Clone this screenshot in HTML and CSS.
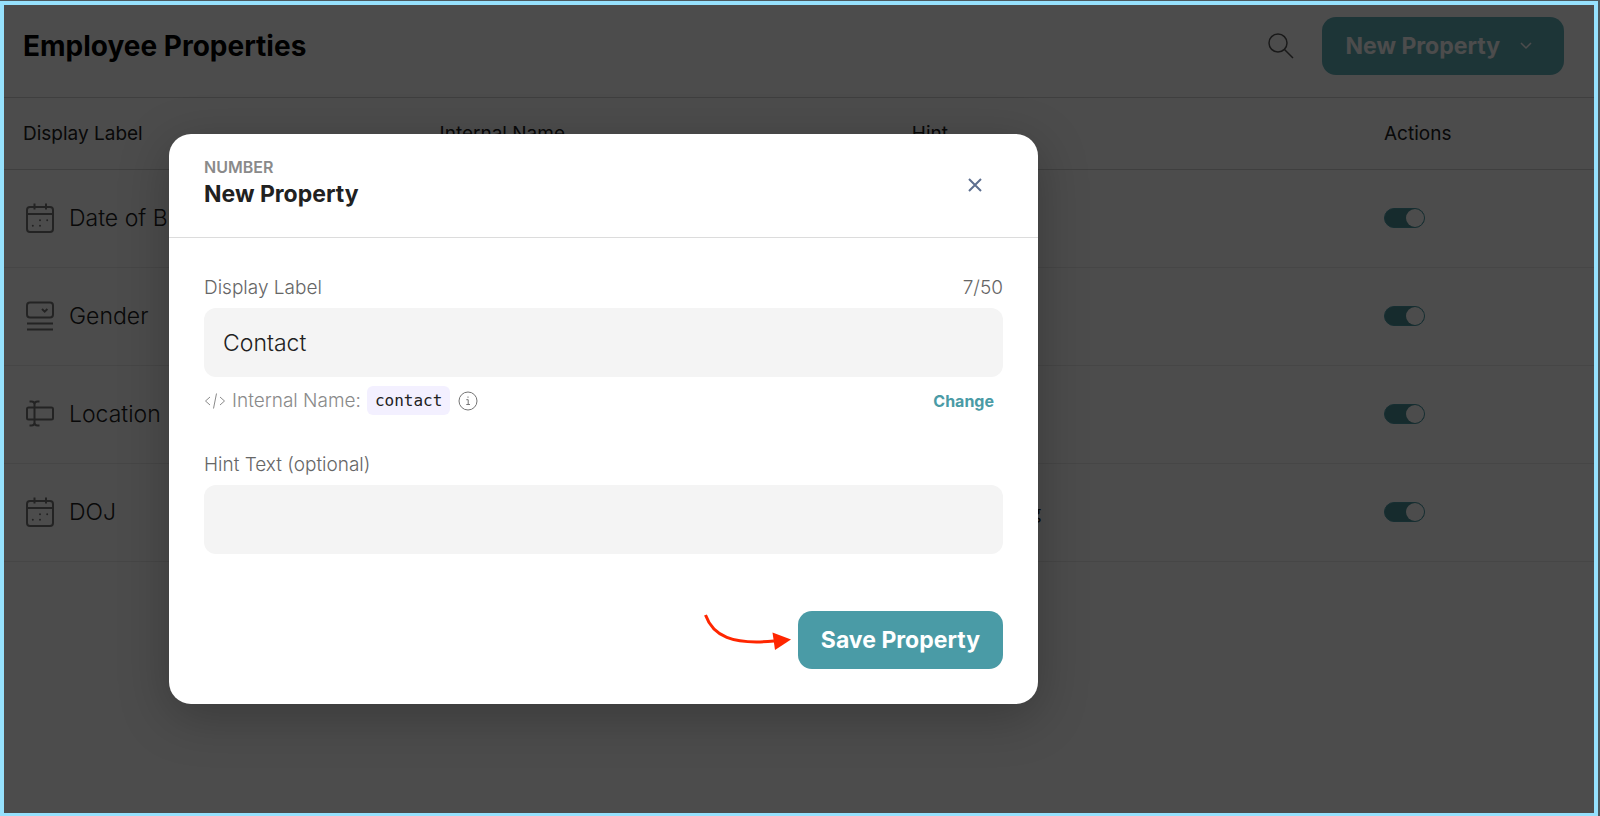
FILE: index.html
```
<!DOCTYPE html>
<html lang="en">
<head>
  <meta charset="UTF-8">
  <meta name="viewport" content="width=device-width, initial-scale=1">
  <title>Employee Properties</title>
  <link rel="stylesheet" href="styles.css">
</head>
<body>

  <!-- icons shared by the table rows -->
  <svg class="sprite" aria-hidden="true">
    <symbol id="icon-calendar" viewBox="0 0 28 30">
      <rect x="1" y="4" width="26" height="25" rx="3" />
      <path d="M1 11h26M8.500 0.500v6M20 0.500v6" />
      <path class="dots" d="M14 17.200h.01M21.200 17.200h.01M6.800 22.700h.01M14 22.700h.01" />
    </symbol>
    <symbol id="icon-dropdown" viewBox="0 0 28 30">
      <rect x="1" y="1.500" width="26" height="15" rx="3" />
      <path d="M16 8l2.700 2.700L21.400 8M1 22.500h26M1 28.500h26" />
    </symbol>
    <symbol id="icon-text" viewBox="0 0 28 30">
      <rect x="1" y="8.500" width="26" height="12" rx="1.500" />
      <path d="M3.500 2.500h2q3 0 3 3v18q0 3-3 3h-2M13.500 2.500h-2q-3 0-3 3v18q0 3 3 3h2" />
    </symbol>
  </svg>

  <div class="page">
    <header class="page-header">
      <h1>Employee Properties</h1>
      <button class="icon-btn" type="button" aria-label="Search">
        <svg width="26" height="26" viewBox="0 0 26 26"><circle cx="10" cy="10" r="9" /><path d="M16.500 16.500l8.500 8.500" /></svg>
      </button>
      <button class="btn new-btn" type="button">
        New Property
        <svg width="12" height="8" viewBox="0 0 12 8"><path d="M1 1l5 5 5-5" /></svg>
      </button>
    </header>

    <table class="properties">
      <colgroup>
        <col class="col-label">
        <col class="col-name">
        <col class="col-hint">
        <col>
      </colgroup>
      <thead>
        <tr>
          <th>Display Label</th>
          <th>Internal Name</th>
          <th>Hint</th>
          <th>Actions</th>
        </tr>
      </thead>
      <tbody>
        <tr>
          <td><div class="label"><svg class="type-icon"><use href="#icon-calendar" /></svg>Date of Birth</div></td>
          <td></td>
          <td></td>
          <td><input class="switch" type="checkbox" aria-label="Date of Birth" checked></td>
        </tr>
        <tr>
          <td><div class="label"><svg class="type-icon"><use href="#icon-dropdown" /></svg>Gender</div></td>
          <td></td>
          <td></td>
          <td><input class="switch" type="checkbox" aria-label="Gender" checked></td>
        </tr>
        <tr>
          <td><div class="label"><svg class="type-icon"><use href="#icon-text" /></svg>Location</div></td>
          <td></td>
          <td></td>
          <td><input class="switch" type="checkbox" aria-label="Location" checked></td>
        </tr>
        <tr>
          <td><div class="label"><svg class="type-icon"><use href="#icon-calendar" /></svg>DOJ</div></td>
          <td></td>
          <td class="hint">Date of Joining</td>
          <td><input class="switch" type="checkbox" aria-label="DOJ" checked></td>
        </tr>
      </tbody>
    </table>

    <div class="overlay">
      <form class="modal" role="dialog" aria-labelledby="modalTitle">
        <div class="modal-header">
          <div>
            <p class="modal-type">NUMBER</p>
            <h2 id="modalTitle">New Property</h2>
          </div>
          <button class="close-btn" type="button" aria-label="Close">
            <svg width="14" height="14" viewBox="0 0 14 14"><path d="M1 1l12 12M13 1L1 13" /></svg>
          </button>
        </div>

        <div class="modal-body">
          <div class="field-head">
            <label for="displayLabel">Display Label</label>
            <span>7/50</span>
          </div>
          <input class="field" id="displayLabel" type="text" value="Contact" maxlength="50">

          <div class="internal">
            <svg width="22" height="18" viewBox="0 0 22 18"><path d="M6 5L1.500 9 6 13M16 5l4.500 4-4.500 4M12.500 1.500l-3 15" /></svg>
            <span>Internal Name:</span>
            <code>contact</code>
            <svg class="info" width="20" height="20" viewBox="0 0 20 20"><circle cx="10" cy="10" r="9" /><path d="M8.300 8.700H10.200V13.500M8.300 13.500h3.700M10 5.500v1.300" /></svg>
            <button class="link-btn" type="button">Change</button>
          </div>

          <div class="field-head">
            <label for="hintText">Hint Text (optional)</label>
          </div>
          <input class="field" id="hintText" type="text">

          <div class="modal-actions">
            <svg class="arrow" width="88" height="38" viewBox="0 0 88 38">
              <path class="arrow-line" d="M1.500 1C9 22 28 31 70 27" />
              <path class="arrow-head" d="M68.500 18.500L87 25.500 71 36z" />
            </svg>
            <button class="btn" type="submit">Save Property</button>
          </div>
        </div>
      </form>
    </div>
  </div>

</body>
</html>
```
FILE: styles.css
```
* {
  box-sizing: border-box;
}

html, body {
  margin: 0;
  height: 100%;
}

body {
  padding: 1px 2px 0 0;
  background: #4d5a60;
  color: #212121;
  font-family: Inter, "Liberation Sans", sans-serif;
  overflow: hidden;
}

button, input {
  font-family: inherit;
}

svg {
  fill: none;
  stroke: currentColor;
  flex: none;
}

.sprite {
  position: absolute;
  width: 0;
  height: 0;
}

.page {
  position: relative;
  height: 100%;
  border: 4px solid #96e1fd;
  border-bottom-width: 3px;
  background: #fff;
}

.page-header {
  display: flex;
  align-items: center;
  padding: 12px 30px 22px 19px;
  border-bottom: 1px solid #d4d4d4;
}

h1 {
  margin: 0;
  flex: 1;
  color: #000;
  font-size: 28px;
  font-weight: 700;
  line-height: 36px;
}

.icon-btn {
  display: flex;
  margin-right: 28px;
  padding: 0;
  border: 0;
  background: none;
  color: #555;
}

.icon-btn svg {
  stroke-width: 1.5;
}

.btn {
  display: flex;
  align-items: center;
  height: 58px;
  padding: 0 23px;
  border: 0;
  border-radius: 14px;
  background: #4a9ba6;
  color: #fff;
  font-size: 23px;
  font-weight: 700;
}

.new-btn {
  gap: 20px;
  padding-right: 32px;
  background: #63b1ba;
}

.new-btn svg {
  stroke-width: 1.5;
}

.properties {
  width: 100%;
  border-collapse: collapse;
  table-layout: fixed;
}

.col-label {
  width: 26.2%;
}

.col-name, .col-hint {
  width: 29.7%;
}

.properties th, .properties td {
  padding: 0 0 0 19px;
  text-align: left;
}

.properties th {
  height: 71px;
  border-bottom: 1px solid #d4d4d4;
  font-size: 19px;
  font-weight: 400;
}

.properties td {
  height: 98px;
  border-bottom: 1px solid #e9e9e9;
  font-size: 23px;
}

.properties td:first-child {
  font-weight: 300;
}

.properties .hint {
  font-family: "Open Sans", sans-serif;
  font-size: 19px;
}

.label {
  display: flex;
  align-items: center;
  gap: 15px;
  padding-left: 3px;
}

.type-icon {
  width: 28px;
  height: 30px;
  color: #777;
  stroke-width: 2;
}

.dots {
  stroke-linecap: round;
}

.switch {
  appearance: none;
  display: block;
  width: 41px;
  height: 20px;
  margin: 0;
  border: 1px solid #4a9ba6;
  border-radius: 10px;
  background: #4a9098;
}

.switch::before {
  content: "";
  display: block;
  width: 18px;
  height: 18px;
  margin-left: auto;
  border-radius: 50%;
  background: #fff;
}

.overlay {
  position: absolute;
  inset: 0;
  display: flex;
  align-items: flex-start;
  padding: 129px 20px 20px 165px;
  background: rgba(0, 0, 0, 0.7);
}

.modal {
  flex: 1;
  max-width: 869px;
  border-radius: 22px;
  background: #fff;
  box-shadow: 0 12px 50px rgba(0, 0, 0, 0.25);
}

.modal-header {
  display: flex;
  justify-content: space-between;
  align-items: flex-start;
  padding: 22px 56px 26px 35px;
  border-bottom: 1px solid #dcdcdc;
}

.modal-type {
  margin: 0;
  color: #8a8a8a;
  font-size: 16px;
  font-weight: 600;
  line-height: 22px;
}

h2 {
  margin: 0;
  font-size: 23px;
  font-weight: 700;
  line-height: 33px;
}

.close-btn {
  display: flex;
  margin-top: 22px;
  padding: 0;
  border: 0;
  background: none;
  color: #5d6f90;
}

.close-btn svg {
  stroke-width: 2;
}

.modal-body {
  padding: 36px 35px 35px;
}

.field-head {
  display: flex;
  justify-content: space-between;
  margin-bottom: 6px;
  color: #666;
  font-size: 19px;
  font-weight: 300;
  line-height: 28px;
}

.field {
  display: block;
  width: 100%;
  height: 69px;
  padding: 0 19px;
  border: 0;
  border-radius: 12px;
  background: #f4f4f4;
  color: #212121;
  font-size: 23px;
  font-weight: 300;
}

.internal {
  display: flex;
  align-items: center;
  margin: 9px 0 36px;
  color: #8a8a8a;
  font-size: 19px;
  font-weight: 300;
}

.internal span {
  margin: 0 6px;
}

.internal code {
  padding: 0 8px;
  border-radius: 6px;
  background: #f3f0ff;
  color: #212121;
  font-family: "DejaVu Sans Mono", monospace;
  font-size: 16px;
  font-weight: 400;
  line-height: 29px;
}

.info {
  margin-left: 8px;
  color: #757575;
}

.link-btn {
  margin-left: auto;
  padding: 0 9px;
  border: 0;
  background: none;
  color: #4a9ba6;
  font-size: 16px;
  font-weight: 700;
}

.modal-actions {
  display: flex;
  justify-content: flex-end;
  align-items: flex-start;
  gap: 6px;
  margin-top: 57px;
}

.arrow {
  margin-top: 3px;
}

.arrow-line {
  stroke: #ff2600;
  stroke-width: 3;
}

.arrow-head {
  fill: #ff2600;
  stroke: none;
}
```
